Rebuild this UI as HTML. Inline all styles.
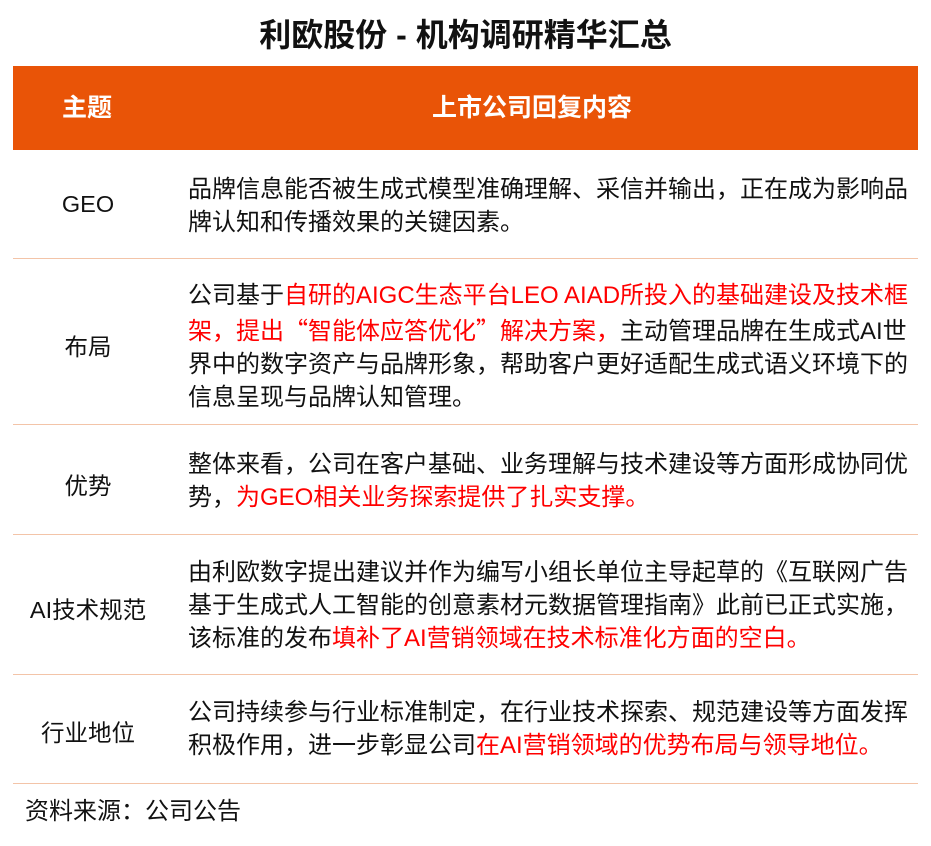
<!DOCTYPE html>
<html><head><meta charset="utf-8"><style>
body{margin:0;width:931px;height:846px;background:#fff;font-family:"Liberation Sans","Noto Sans CJK SC",sans-serif;color:#111;position:relative;overflow:hidden}
.t{position:absolute;top:14px;left:0;width:931px;text-align:center;font-size:32px;font-weight:bold;line-height:42px}
.hd{position:absolute;left:13px;top:66px;width:905px;height:84px;background:#E95407;color:#fff;font-weight:bold;font-size:25px}
.hd span{position:absolute;top:26px;line-height:32px}
.row{position:absolute;left:13px;width:905px;border-bottom:1px solid #f3c4a8}
.k{position:absolute;left:0;width:150px;text-align:center;font-size:23.5px}
.v{position:absolute;left:175px;font-size:24px;line-height:33px;white-space:nowrap}
.r{color:#f00}
.q{font-family:"Noto Sans CJK SC",sans-serif}
.src{position:absolute;left:25px;top:797px;font-size:24px;line-height:30px}
</style></head><body>
<div class="t">利欧股份 - 机构调研精华汇总</div>
<div class="hd"><span style="left:49px">主题</span><span style="left:419px">上市公司回复内容</span></div>
<div class="row" style="top:150px;height:108px"><div class="k" style="top:41px">GEO</div><div class="v" style="top:23px">品牌信息能否被生成式模型准确理解、采信并输出，正在成为影响品<br>牌认知和传播效果的关键因素。</div></div>
<div class="row" style="top:259px;height:165px"><div class="k" style="top:69px">布局</div><div class="v" style="top:20px">公司基于<span class="r">自研的AIGC生态平台LEO AIAD所投入的基础建设及技术框</span><br><span class="r">架，提出<span class="q">“</span>智能体应答优化<span class="q">”</span>解决方案，</span>主动管理品牌在生成式AI世<br>界中的数字资产与品牌形象，帮助客户更好适配生成式语义环境下的<br>信息呈现与品牌认知管理。</div></div>
<div class="row" style="top:425px;height:109px"><div class="k" style="top:42px">优势</div><div class="v" style="top:23px">整体来看，公司在客户基础、业务理解与技术建设等方面形成协同优<br>势，<span class="r">为GEO相关业务探索提供了扎实支撑。</span></div></div>
<div class="row" style="top:535px;height:139px"><div class="k" style="top:56px">AI技术规范</div><div class="v" style="top:21px">由利欧数字提出建议并作为编写小组长单位主导起草的《互联网广告<br>基于生成式人工智能的创意素材元数据管理指南》此前已正式实施，<br>该标准的发布<span class="r">填补了AI营销领域在技术标准化方面的空白。</span></div></div>
<div class="row" style="top:675px;height:108px"><div class="k" style="top:39px">行业地位</div><div class="v" style="top:21px">公司持续参与行业标准制定，在行业技术探索、规范建设等方面发挥<br>积极作用，进一步彰显公司<span class="r">在AI营销领域的优势布局与领导地位。</span></div></div>
<div class="src">资料来源：公司公告</div>
</body></html>
